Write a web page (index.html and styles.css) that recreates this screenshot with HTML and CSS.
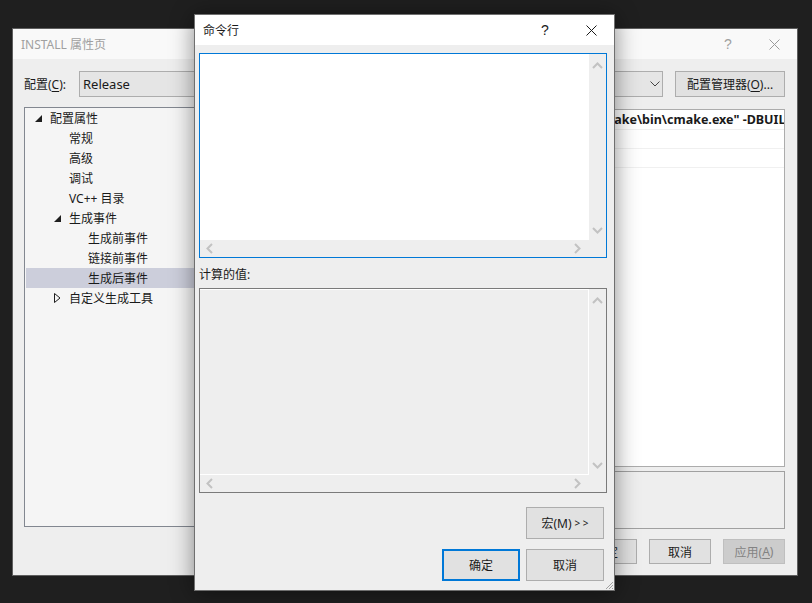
FILE: index.html
```html
<!DOCTYPE html>
<html>
<head>
<meta charset="utf-8">
<link rel="stylesheet" href="styles.css">
</head>
<body>
<div class="win back">
  <div class="titlebar">
    <div class="title inactive">INSTALL 属性页</div>
    <div class="cap-btn q inactive-glyph">?</div>
    <div class="cap-btn"><svg width="11" height="11" viewBox="0 0 11 11"><path d="M0.5 0.5L10.5 10.5M10.5 0.5L0.5 10.5" stroke="#9a9a9a" stroke-width="1"/></svg></div>
  </div>
  <div class="back-body">
    <div class="cfg-row">
      <span class="lbl">配置(<u>C</u>):</span>
      <div class="combo"><span>Release</span><svg width="10" height="6" viewBox="0 0 10 6"><path d="M0.5 0.5L5 5L9.5 0.5" fill="none" stroke="#444" stroke-width="1"/></svg></div>
      <div class="spacer"></div>
      <div class="btn mgr">配置管理器(<u>O</u>)...</div>
    </div>
    <div class="main">
      <div class="tree">
        <div class="node l0"><svg class="tri" width="7" height="7" viewBox="0 0 7 7"><path d="M7 0L7 7L0 7Z" fill="#1e1e1e"/></svg>配置属性</div>
        <div class="node l1">常规</div>
        <div class="node l1">高级</div>
        <div class="node l1">调试</div>
        <div class="node l1">VC++ 目录</div>
        <div class="node l1 exp"><svg class="tri" width="7" height="7" viewBox="0 0 7 7"><path d="M7 0L7 7L0 7Z" fill="#1e1e1e"/></svg>生成事件</div>
        <div class="node l2">生成前事件</div>
        <div class="node l2">链接前事件</div>
        <div class="node l2 sel">生成后事件</div>
        <div class="node l1 exp col"><svg class="tri" width="7" height="10" viewBox="0 0 7 10"><path d="M0.5 0.5L6 5L0.5 9.5Z" fill="none" stroke="#1e1e1e" stroke-width="1"/></svg>自定义生成工具</div>
      </div>
      <div class="right">
        <div class="grid">
          <div class="grow first"><span class="gval">make\bin\cmake.exe" -DBUILD_TYPE=$(Configuration) -P cmake_install.cmake</span></div>
          <div class="grow"></div>
          <div class="grow"></div>
        </div>
        <div class="desc"></div>
      </div>
    </div>
    <div class="btn-row">
      <div class="btn sm">确定</div>
      <div class="btn sm">取消</div>
      <div class="btn sm disabled">应用(<u>A</u>)</div>
    </div>
  </div>
</div>

<div class="dlg">
  <div class="dtitle">
    <div class="title">命令行</div>
    <div class="cap-btn q">?</div>
    <div class="cap-btn"><svg width="11" height="11" viewBox="0 0 11 11"><path d="M0.5 0.5L10.5 10.5M10.5 0.5L0.5 10.5" stroke="#1a1a1a" stroke-width="1"/></svg></div>
  </div>
  <div class="dbody">
    <div class="tb focus">
      <div class="tb-content white"></div>
      <div class="vscroll">
        <svg width="11" height="7" viewBox="0 0 11 7"><path d="M1 6L5.5 1.5L10 6" fill="none" stroke="#c2c2c2" stroke-width="2"/></svg>
        <svg width="11" height="7" viewBox="0 0 11 7"><path d="M1 1L5.5 5.5L10 1" fill="none" stroke="#c2c2c2" stroke-width="2"/></svg>
      </div>
      <div class="hscroll">
        <svg width="7" height="11" viewBox="0 0 7 11"><path d="M6 1L1.5 5.5L6 10" fill="none" stroke="#c2c2c2" stroke-width="2"/></svg>
        <svg width="7" height="11" viewBox="0 0 7 11"><path d="M1 1L5.5 5.5L1 10" fill="none" stroke="#c2c2c2" stroke-width="2"/></svg>
      </div>
      <div class="corner"></div>
    </div>
    <div class="label">计算的值:</div>
    <div class="tb ro">
      <div class="tb-content grey"></div>
      <div class="vscroll">
        <svg width="11" height="7" viewBox="0 0 11 7"><path d="M1 6L5.5 1.5L10 6" fill="none" stroke="#c2c2c2" stroke-width="2"/></svg>
        <svg width="11" height="7" viewBox="0 0 11 7"><path d="M1 1L5.5 5.5L10 1" fill="none" stroke="#c2c2c2" stroke-width="2"/></svg>
      </div>
      <div class="hscroll">
        <svg width="7" height="11" viewBox="0 0 7 11"><path d="M6 1L1.5 5.5L6 10" fill="none" stroke="#c2c2c2" stroke-width="2"/></svg>
        <svg width="7" height="11" viewBox="0 0 7 11"><path d="M1 1L5.5 5.5L1 10" fill="none" stroke="#c2c2c2" stroke-width="2"/></svg>
      </div>
      <div class="corner"></div>
    </div>
    <div class="drow r1">
      <div class="btn big">宏(M)<span class="gt">&gt; &gt;</span></div>
    </div>
    <div class="drow r2">
      <div class="btn big default">确定</div>
      <div class="btn big">取消</div>
    </div>
  </div>
  <svg class="grip" width="9" height="9" viewBox="0 0 9 9"><path d="M8 1L1 8M8 4L4 8M8 7L7 8" stroke="#a0a0a0" stroke-width="1"/></svg>
</div>
</body>
</html>
```

FILE: styles.css
```css
* { box-sizing: border-box; }
html, body { margin: 0; padding: 0; }
body {
  width: 812px;
  height: 603px;
  background: #1f1f1f;
  position: relative;
  overflow: hidden;
  font-family: "Noto Sans", "Noto Sans CJK SC", sans-serif;
  font-size: 12px;
  color: #1a1a1a;
}
u { text-decoration: underline; text-underline-offset: 2px; }

.win {
  position: absolute;
  border: 1px solid #5e5e5e;
  background: #eeeeee;
  display: flex;
  flex-direction: column;
  overflow: hidden;
}
.back { left: 12px; top: 28px; width: 786px; height: 548px; }

.titlebar {
  height: 30px;
  background: #f9f9f9;
  display: flex;
  align-items: center;
  padding-left: 8px;
}
.title { flex: 1; font-size: 12px; }
.title.inactive { color: #a0a0a0; }
.cap-btn {
  width: 46px;
  height: 30px;
  display: flex;
  align-items: center;
  justify-content: center;
  font-family: "Liberation Sans", sans-serif;
  font-size: 14px;
}
.inactive-glyph { color: #a0a0a0; }

.back-body {
  flex: 1;
  min-width: 0;
  padding: 12px 12px 0 11px;
  display: flex;
  flex-direction: column;
}
.cfg-row { display: flex; align-items: center; height: 26px; }
.lbl { width: 55px; flex: none; }
.combo {
  width: 584px;
  flex: none;
  height: 26px;
  background: #e5e5e5;
  border: 1px solid #adadad;
  display: flex;
  align-items: center;
  padding-left: 3px;
  font-size: 13px;
}
.combo svg { margin-left: auto; margin-right: 2px; }
.spacer { flex: 1; }
.btn {
  background: #e1e1e1;
  border: 1px solid #adadad;
  display: flex;
  align-items: center;
  justify-content: center;
  white-space: nowrap;
}
.mgr { width: 110px; height: 26px; flex: none; }

.main { display: flex; margin-top: 10px; gap: 6px; min-width: 0; }
.tree {
  width: 206px;
  flex: none;
  height: 420px;
  border: 1px solid #828790;
  background: #f5f5f5;
}
.node {
  height: 20px;
  display: flex;
  align-items: center;
  position: relative;
  white-space: nowrap;
}
.node .tri { position: absolute; }
.l0 { padding-left: 25px; }
.l0 .tri { left: 10px; top: 7px; }
.l1 { padding-left: 44px; }
.l1 .tri { left: 29px; top: 7px; }
.l1.col .tri { top: 5px; }
.l2 { padding-left: 63px; }
.sel { background: #cccedb; margin-left: 1px; padding-left: 62px; }

.right {
  flex: 1;
  min-width: 0;
  display: flex;
  flex-direction: column;
  gap: 4px;
  margin-top: 2px;
}
.grid {
  height: 358px;
  border: 1px solid #acacac;
  background: #ffffff;
  overflow: hidden;
}
.grow {
  height: 19px;
  border-bottom: 1px solid #f0f0f0;
  display: flex;
  align-items: center;
  padding-left: 365px;
  white-space: nowrap;
  overflow: hidden;
}
.grow.first { height: 20px; }
.gval { font-weight: bold; flex: none; font-size: 12.5px; }
.desc {
  height: 58px;
  border: 1px solid #a0a0a0;
  background: #eeeeee;
}
.btn-row {
  margin-top: 10px;
  display: flex;
  justify-content: flex-end;
  gap: 12px;
}
.btn.sm { width: 62px; height: 25px; }
.btn.disabled { background: #cccccc; border-color: #bfbfbf; color: #838383; }

/* front dialog */
.dlg {
  position: absolute;
  left: 194px;
  top: 14px;
  width: 421px;
  height: 577px;
  border: 1px solid #6f6f6f;
  background: #eeeeee;
  box-shadow: 0 2px 22px rgba(0, 0, 0, 0.45);
  display: flex;
  flex-direction: column;
}
.dtitle {
  height: 30px;
  background: #ffffff;
  display: flex;
  align-items: center;
  padding-left: 8px;
}
.dtitle .title { color: #1a1a1a; }
.dbody {
  flex: 1;
  padding: 8px 7px 0 4px;
  display: flex;
  flex-direction: column;
}
.tb {
  height: 205px;
  display: grid;
  grid-template-columns: 1fr 17px;
  grid-template-rows: 1fr 17px;
}
.tb.focus { border: 1px solid #0078d7; }
.tb.ro { border: 1px solid #7a7a7a; }
.tb-content.white { background: #ffffff; }
.tb-content.grey { background: #eeeeee; border-top: 1px solid #ffffff; border-bottom: 1px solid #ffffff; border-right: 1px solid #ffffff; }
.vscroll {
  background: #eeeeee;
  display: flex;
  flex-direction: column;
  justify-content: space-between;
  align-items: center;
  padding: 8px 0 6px;
}
.hscroll {
  background: #eeeeee;
  display: flex;
  justify-content: space-between;
  align-items: center;
  padding: 0 8px 0 6px;
}
.corner { background: #eeeeee; }
.label { margin: 9px 0 5px; height: 16px; line-height: 16px; }
.drow { display: flex; justify-content: flex-end; gap: 6px; padding-right: 3px; }
.r1 { margin-top: 14px; }
.r2 { margin-top: 10px; }
.btn.big { width: 78px; height: 32px; }
.btn.default { border: 2px solid #0078d7; }
.gt { font-size: 10px; margin-left: 3px; }
.grip { position: absolute; right: 0; bottom: 0; }
```
